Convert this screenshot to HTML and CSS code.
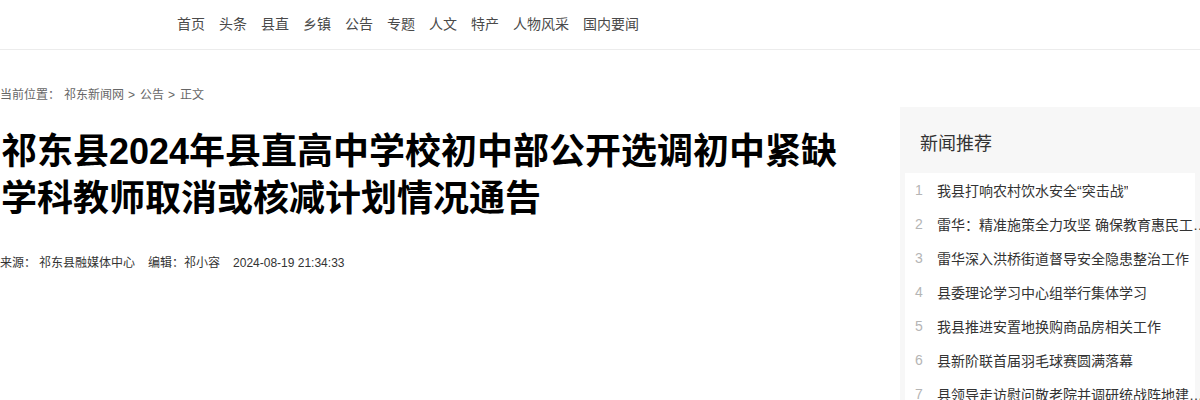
FILE: index.html
```html
<!DOCTYPE html>
<html lang="zh-CN">
<head>
<meta charset="utf-8">
<title>祁东县2024年县直高中学校初中部公开选调初中紧缺学科教师取消或核减计划情况通告</title>
<link rel="stylesheet" href="styles.css">
</head>
<body>
<header class="topbar">
  <nav class="nav">
    <a href="#">首页</a>
    <a href="#">头条</a>
    <a href="#">县直</a>
    <a href="#">乡镇</a>
    <a href="#">公告</a>
    <a href="#">专题</a>
    <a href="#">人文</a>
    <a href="#">特产</a>
    <a href="#">人物风采</a>
    <a href="#">国内要闻</a>
  </nav>
</header>
<div class="page">
  <main class="article">
    <div class="crumbs">
      <span class="crumb-label">当前位置：</span><a href="#">祁东新闻网</a><span class="sep">&gt;</span><a href="#">公告</a><span class="sep">&gt;</span><span>正文</span>
    </div>
    <h1 class="title">祁东县2024年县直高中学校初中部公开选调初中紧缺学科教师取消或核减计划情况通告</h1>
    <div class="meta">
      <span class="meta-item">来源：<span class="meta-val">祁东县融媒体中心</span></span>
      <span class="meta-item">编辑：祁小容</span>
      <span class="meta-item">2024-08-19 21:34:33</span>
    </div>
  </main>
  <aside class="side">
    <h2 class="side-title">新闻推荐</h2>
    <ol class="rank">
      <li><span class="num">1</span><a href="#">我县打响农村饮水安全“突击战”</a></li>
      <li><span class="num">2</span><a href="#">雷华：精准施策全力攻坚 确保教育惠民工程落地见效</a></li>
      <li><span class="num">3</span><a href="#">雷华深入洪桥街道督导安全隐患整治工作</a></li>
      <li><span class="num">4</span><a href="#">县委理论学习中心组举行集体学习</a></li>
      <li><span class="num">5</span><a href="#">我县推进安置地换购商品房相关工作</a></li>
      <li><span class="num">6</span><a href="#">县新阶联首届羽毛球赛圆满落幕</a></li>
      <li><span class="num">7</span><a href="#">县领导走访慰问敬老院并调研统战阵地建设工作</a></li>
    </ol>
  </aside>
</div>
</body>
</html>
```

FILE: styles.css
```css
* { box-sizing: border-box; }
html, body { margin: 0; padding: 0; background: #fff; }
body {
  font-family: "Liberation Sans", Arial, "Noto Sans CJK SC", sans-serif;
  color: #333;
  overflow: hidden;
}
a { color: inherit; text-decoration: none; }

.topbar {
  height: 50px;
  border-bottom: 1px solid #ececec;
}
.nav {
  display: flex;
  gap: 14px;
  padding-left: 177px;
  height: 49px;
  align-items: center;
  padding-bottom: 4px;
  font-size: 14px;
  color: #4a4a4a;
}

.page {
  display: flex;
  align-items: flex-start;
  width: 1200px;
}
.article {
  width: 900px;
  flex: none;
}
.crumbs {
  margin-top: 37px;
  font-size: 12px;
  line-height: 16px;
  color: #666;
  display: flex;
  align-items: center;
}
.crumb-label { margin-right: 4px; }
.sep { margin: 0 5px 0 4px; }

.title {
  margin: 25px 0 0 1px;
  font-size: 36px;
  line-height: 47px;
  font-weight: 700;
  color: #000;
  width: 860px;
  font-family: "Liberation Sans", Arial, "Noto Sans CJK SC", sans-serif;
}
.meta {
  margin-top: 33px;
  font-size: 12px;
  line-height: 16px;
  color: #333;
  display: flex;
  gap: 13px;
}
.meta-val { margin-left: 3px; }

.side {
  width: 300px;
  flex: none;
  margin-top: 57px;
  background: #f7f7f7;
  padding: 0 5px 0 5px;
}
.side-title {
  margin: 0;
  padding: 25px 0 0 15px;
  height: 67px;
  font-size: 18px;
  line-height: 24px;
  font-weight: 400;
  color: #333;
}
.rank {
  list-style: none;
  margin: 0;
  padding: 0;
  background: #fff;
}
.rank li {
  display: flex;
  align-items: center;
  height: 34px;
  margin-top: -1px;
  margin-bottom: 1px;
  font-size: 14px;
  white-space: nowrap;
}
.num {
  width: 32px;
  flex: none;
  padding-left: 10px;
  color: #b5b5b5;
  font-size: 14px;
}
.rank a {
  overflow: hidden;
  text-overflow: ellipsis;
  color: #333;
  min-width: 0;
  margin-right: -16px;
}
```
